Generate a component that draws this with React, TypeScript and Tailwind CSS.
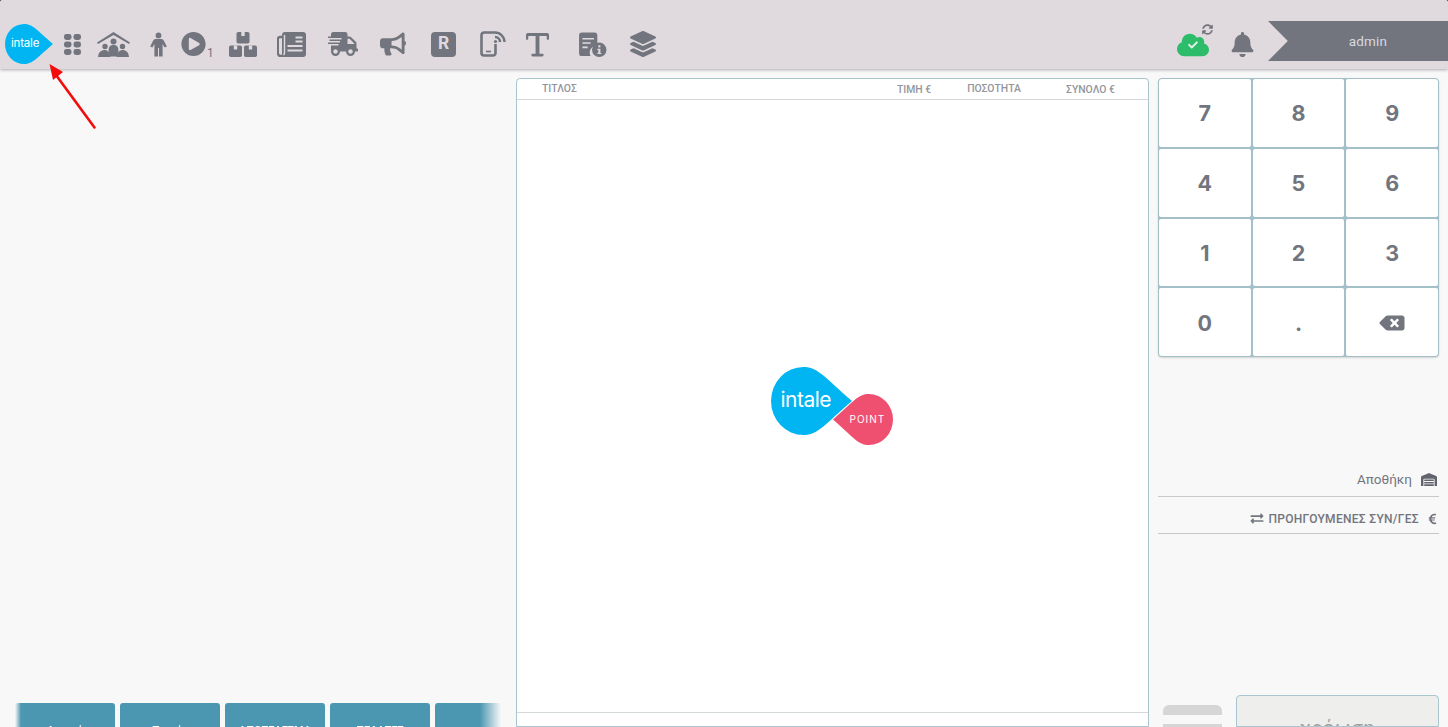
import React from "react";
import {
  FaPlayCircle, FaShippingFast, FaBullhorn, FaLayerGroup,
  FaCloud, FaCheck, FaSyncAlt, FaBell, FaBackspace, FaWarehouse, FaExchangeAlt, FaEuroSign,
} from "react-icons/fa";

const G = "#72757e";
const BG = "#e0dade";

function Drop({ className = "", color, flip = false }: { className?: string; color: string; flip?: boolean }) {
  return (
    <svg viewBox="0 0 100 80" preserveAspectRatio="none" className={className} aria-hidden>
      <path
        d={flip ? "M100 40 A40 40 0 0 1 60 80 C42 80 34 68 0 40 C34 12 42 0 60 0 A40 40 0 0 1 100 40Z" : "M0 40 A40 40 0 0 1 40 0 C58 0 66 12 100 40 C66 68 58 80 40 80 A40 40 0 0 1 0 40Z"}
        fill={color}
      />
    </svg>
  );
}

function GridIcon() {
  return (
    <svg viewBox="0 0 17 21" className="w-[17px] h-[21px]" fill={G} aria-hidden>
      {[0, 9.5].flatMap((x) => [0, 7.5, 15].map((y) => <rect key={`${x}-${y}`} x={x} y={y} width="7.5" height="6" rx="2.4" />))}
    </svg>
  );
}

function FamilyIcon() {
  return (
    <svg viewBox="0 0 33 25" className="w-[33px] h-[25px]" fill={G} aria-hidden>
      <path d="M0 10.5 L16.5 0 L33 10.5 L32 12 L16.5 3 L1 12Z" />
      <circle cx="16.5" cy="9.5" r="3" />
      <path d="M11.5 20 C11.5 14.5 13 13 16.5 13 C20 13 21.5 14.5 21.5 20 L20 24.5 L13 24.5Z" />
      <circle cx="8" cy="14.5" r="2.7" />
      <path d="M1 25 C1.5 20 4 18 8 18 C11 18 12.5 21 13.5 25Z" />
      <circle cx="25.5" cy="14.5" r="2.7" />
      <path d="M19.5 25 C20.5 21 22 18 25.5 18 C29 18 31.5 20 32 25Z" />
    </svg>
  );
}

function PersonIcon() {
  return (
    <svg viewBox="0 0 17 24" className="w-[17px] h-[25px]" fill={G} aria-hidden>
      <circle cx="8.5" cy="2.9" r="2.9" />
      <path d="M5.5 6.5 H11.5 C13 6.5 13.5 7.5 14 8.5 L16.8 14 L14.6 15 L12.6 11.5 V24 H9 V15.5 H8 V24 H4.4 V11.5 L2.4 15 L0.2 14 L3 8.5 C3.5 7.5 4 6.5 5.5 6.5Z" />
    </svg>
  );
}

function BoxesIcon() {
  const box = (x: number, y: number) => (
    <g key={`${x}-${y}`}>
      <rect x={x} y={y} width="13" height="11.5" rx="1.8" fill={G} />
      <rect x={x + 4.8} y={y} width="3.4" height="4" fill={BG} />
    </g>
  );
  return (
    <svg viewBox="0 0 28 25" className="w-[28px] h-[25px]" aria-hidden>
      {box(7.5, 0)}
      {box(0, 13.5)}
      {box(15, 13.5)}
    </svg>
  );
}

function NewsIcon() {
  return (
    <svg viewBox="0 0 29 25" className="w-[29px] h-[25px]" aria-hidden>
      <rect x="5" y="0" width="24" height="25" rx="3" fill={G} />
      <path d="M5 5 H3 A2.2 2.2 0 0 0 0.8 7.2 V21 A3 3 0 0 0 3.8 24 H7" fill="none" stroke={G} strokeWidth="2.4" />
      <path d="M7.5 3 V20.5 A3 3 0 0 1 6.5 23" fill="none" stroke={BG} strokeWidth="1.4" />
      <path d="M18.5 5.5 H25.5 M18.5 9.5 H25.5 M10.5 14 H25.5 M10.5 18.5 H25.5" stroke={BG} strokeWidth="1.8" />
    </svg>
  );
}

function PhoneWifi() {
  return (
    <svg viewBox="0 0 26 26" className="w-[26px] h-[26px]" fill="none" stroke={G} aria-hidden>
      <path d="M15 1.5 H4 A2.5 2.5 0 0 0 1.5 4 V22 A2.5 2.5 0 0 0 4 24.5 H13 A2.5 2.5 0 0 0 15.5 22 V13" strokeWidth="2.6" />
      <path d="M6 20.5 H11" strokeWidth="1.6" />
      <path d="M15 1.5 A9.5 9.5 0 0 1 24.5 11" strokeWidth="2.4" />
      <path d="M15 6 A5 5 0 0 1 20 11" strokeWidth="2.4" />
      <circle cx="15.5" cy="10.5" r="1.6" fill={G} stroke="none" />
    </svg>
  );
}

function TIcon() {
  return (
    <svg viewBox="0 0 26 26" className="w-[25px] h-[25px]" fill={G} aria-hidden>
      <path d="M1 7 V3 A2 2 0 0 1 3 1 H23 A2 2 0 0 1 25 3 V7 A1.2 1.2 0 0 1 22.6 7 V4.2 H15 V22.6 H18 A1.4 1.4 0 0 1 18 25.4 H8 A1.4 1.4 0 0 1 8 22.6 H11 V4.2 H3.4 V7 A1.2 1.2 0 0 1 1 7Z" />
    </svg>
  );
}

function DocInfo() {
  return (
    <svg viewBox="0 0 29 26" className="w-[28px] h-[25px]" aria-hidden>
      <path d="M3 0.5 H16 A3 3 0 0 1 19 3.5 V14 A7.5 7.5 0 0 0 12 25 H3 A3 3 0 0 1 0 22 V3.5 A3 3 0 0 1 3 0.5Z" fill={G} />
      <path d="M3.5 7 H15.5 M3.5 11.5 H12 M3.5 16 H9" stroke={BG} strokeWidth="1.6" />
      <circle cx="21" cy="18.5" r="7.5" fill={G} />
      <rect x="20" y="13.8" width="2.2" height="2.2" fill={BG} />
      <path d="M19 17.5 H22.2 V21.8 H23.2 V23 H19 V21.8 H20 V18.7 H19Z" fill={BG} />
    </svg>
  );
}

function Logo() {
  return (
    <div className="relative w-[48px] h-[40px] ml-[3px] shrink-0">
      <Drop color="#00b5f1" className="w-[48px] h-[40px] absolute left-0 top-0" />
      <span className="absolute left-[6px] top-[10px] text-[11.5px] leading-[18px] text-white font-['Inter',sans-serif] tracking-[-0.2px]">intale</span>
    </div>
  );
}

const keys = ["7", "8", "9", "4", "5", "6", "1", "2", "3", "0", "."];
const tabs = ["Αρχικά", "Ταμείο", "ΑΠΟΤΕΛΕΣΜΑ", "ΠΕΛΑΤΕΣ", ""];

export default function App() {
  return (
    <div className="relative w-[1448px] h-[727px] overflow-hidden bg-[#444444]">
    <div className="w-full h-full overflow-hidden rounded-t-[3px] bg-[#f8f8f8] font-['Roboto',sans-serif]">
      {/* Header */}
      <header className="h-[69px] bg-[#e0dade] shadow-[0_1px_3px_rgba(0,0,0,0.3)] flex items-end relative z-10 pb-[5px] pl-[2px]">
        <Logo />
        <div className="h-[40px] flex items-center text-[#72757e]">
          <div className="ml-[11px]"><GridIcon /></div>
          <div className="ml-[16px]"><FamilyIcon /></div>
          <div className="ml-[20px]"><PersonIcon /></div>
          <div className="ml-[14px] relative w-[32px] h-[26px]">
            <FaPlayCircle className="w-[25px] h-[26px]" />
            <span className="absolute left-[26px] top-[15px] text-[12px] leading-[14px]">1</span>
          </div>
          <div className="ml-[16px]"><BoxesIcon /></div>
          <div className="ml-[20px]"><NewsIcon /></div>
          <div className="ml-[22px]"><FaShippingFast className="w-[30px] h-[26px]" /></div>
          <div className="ml-[22px]"><FaBullhorn className="w-[26px] h-[26px]" /></div>
          <div className="ml-[25px] w-[25px] h-[25px] rounded-[4px] bg-[#72757e] flex items-center justify-center text-[#e0dade] text-[17px] font-bold font-['Inter',sans-serif]">R</div>
          <div className="ml-[24px]"><PhoneWifi /></div>
          <div className="ml-[19px]"><TIcon /></div>
          <div className="ml-[29px]"><DocInfo /></div>
          <div className="ml-[23px]"><FaLayerGroup className="w-[26px] h-[26px]" /></div>
        </div>
        <div className="ml-auto flex items-center h-[40px]">
          <div className="relative w-[32px] h-[40px] mr-[22px]">
            <FaCloud className="absolute left-0 top-[8px] w-[32px] h-[26px] text-[#2dbd6a]" />
            <FaCheck className="absolute left-[10px] top-[16px] w-[12px] h-[10px] text-[#e0f0e6]" />
            <FaSyncAlt className="absolute left-[25px] top-[0px] w-[11px] h-[11px] text-[#72757e]" />
          </div>
          <FaBell className="w-[23px] h-[25px] text-[#72757e] mr-[14px]" />
          <div className="w-[180px] h-[40px] self-start -mt-[3px] bg-[#72757e] [clip-path:polygon(0_0,100%_0,100%_100%,0_100%,11%_50%)] flex items-center justify-center pl-[20px] text-[#d8d8de] text-[13.5px] tracking-[0.2px]">admin</div>
        </div>
      </header>

      {/* Body */}
      <div className="flex h-[658px]">
        <section className="w-[516px] shrink-0 relative flex flex-col justify-end">
          <div className="flex gap-[5px] pl-[15px] h-[24px] w-[501px] overflow-hidden [mask-image:linear-gradient(to_right,transparent_15px,black_21px,black_480px,transparent_100%)]">
            {tabs.map((t, i) => (
              <div key={i} className="w-[100px] h-[60px] shrink-0 bg-[#4b96b0] rounded-t-[3px] text-white text-[11px] leading-[16px] font-semibold text-center pt-[20px]">{t}</div>
            ))}
          </div>
        </section>

        <section className="w-[633px] shrink-0 mt-[9px] bg-white border border-[#a9c5cd] rounded-t-[4px] flex flex-col">
          <div className="h-[21px] border-b border-[#d4dadc] flex text-[10.4px] font-medium text-[#94969d]">
            <span className="ml-[25px] mt-[2px]">ΤΙΤΛΟΣ</span>
            <span className="ml-auto mt-[3px]">ΤΙΜΗ €</span>
            <span className="ml-[36px] mt-[2px]">ΠΟΣΟΤΗΤΑ</span>
            <span className="ml-[45px] mt-[3px] mr-[33px]">ΣΥΝΟΛΟ €</span>
          </div>
          <div className="flex-1 flex items-center justify-center pb-[3px]">
            <div className="relative w-[124px] h-[78px] mt-[3px]">
              <Drop color="#00b5f1" className="absolute left-0 top-0 w-[81px] h-[68px]" />
              <Drop color="#f05070" flip className="absolute left-[62px] top-[27px] w-[60px] h-[51px]" />
              <span className="absolute left-[10px] top-[19px] text-[21px] leading-[28px] text-white font-['Inter',sans-serif] tracking-[-0.5px]">intale</span>
              <span className="absolute left-[79px] top-[45px] text-[10px] leading-[14px] text-white tracking-[1px] font-['Inter',sans-serif]">POINT</span>
            </div>
          </div>
          <div className="h-[14px] border-t border-[#d4dadc]" />
        </section>

        <section className="flex-1 pl-[9px] pr-[10px] mt-[9px] flex flex-col">
          <div className="grid grid-cols-3 gap-[2px] bg-[#a3bfc8] rounded-[4px] border border-[#a3bfc8] shadow-[0_1px_2px_rgba(0,0,0,0.15)] overflow-hidden h-[279px]">
            {keys.map((k) => (
              <div key={k} className="bg-white rounded-[2px] flex items-center justify-center pt-[1px] text-[#72757e] text-[21.5px] font-bold font-['Inter',sans-serif]">{k}</div>
            ))}
            <div className="bg-white rounded-[2px] flex items-center justify-center pt-[1px] text-[#72757e]"><FaBackspace className="w-[26px] h-[20px]" /></div>
          </div>
          <div className="mt-[106px] h-[34px] border-b border-[#c8c8c8] flex items-center justify-end gap-[9px] pr-[2px] text-[13.5px] text-[#72757e]">
            <span>Αποθήκη</span>
            <FaWarehouse className="w-[16px] h-[13px] text-[#62656e]" />
          </div>
          <div className="h-[37px] border-b border-[#c8c8c8] flex items-center justify-end pt-[7px] pr-[2px] text-[12px] tracking-[0.3px] font-medium text-[#72757e]">
            <FaExchangeAlt className="w-[14px] h-[13px] mr-[4px]" />
            <span>ΠΡΟΗΓΟΥΜΕΝΕΣ ΣΥΝ/ΓΕΣ</span>
            <FaEuroSign className="w-[9px] h-[12px] ml-[9px]" />
          </div>
          <div className="flex-1 flex items-end gap-[14px]">
            <div className="w-[59px] ml-[5px] mb-[-1px] flex flex-col gap-[9px]">
              <div className="h-[10px] bg-[#d6d6d6] rounded-t-[6px]" />
              <div className="h-[4px] bg-[#d6d6d6]" />
            </div>
            <div className="w-[203px] h-[32px] bg-[#eeeeec] border border-[#a9c5cd] rounded-t-[4px] text-center text-[#a0a0a0] text-[20px] leading-[28px] pt-[18px] tracking-[0.5px] overflow-hidden">χρέωση</div>
          </div>
        </section>
      </div>
    </div>

      {/* Annotation arrow */}
      <svg className="absolute left-[45px] top-[60px] w-[55px] h-[72px] z-20" viewBox="0 0 55 72" aria-hidden>
        <path d="M49.5 67.5 L11 15" stroke="#f40c0c" strokeWidth="2.6" strokeLinecap="round" />
        <path d="M4.5 4 L18 12 L8 20Z" fill="#f40c0c" />
      </svg>
    </div>
  );
}
